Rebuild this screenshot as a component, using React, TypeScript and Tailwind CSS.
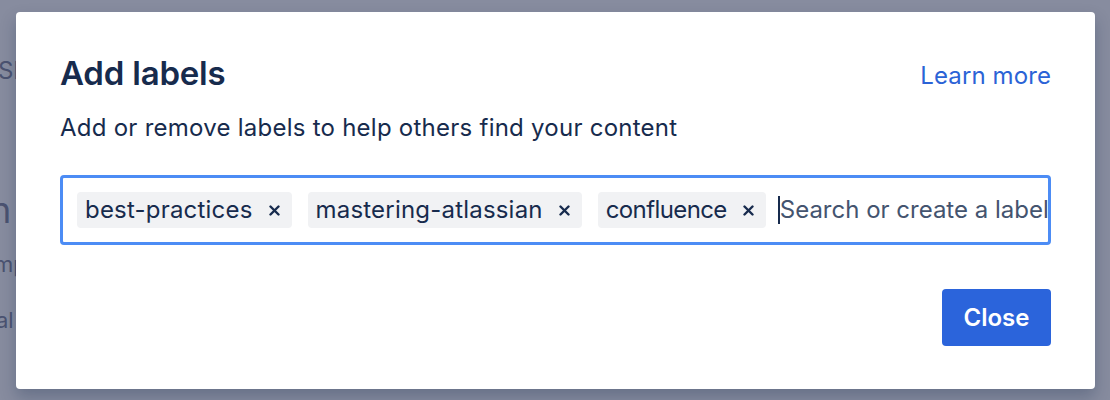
import React from "react";

const labels = [
  { text: "best-practices", tight: false },
  { text: "mastering-atlassian", tight: false },
  { text: "confluence", tight: true },
];

function Chip({ text, tight }: { text: string; tight: boolean }) {
  return (
    <div className="flex shrink-0 items-center h-[36px] rounded-[4px] bg-[#f1f2f4] pl-[8px] pr-[12px] gap-[16px] whitespace-nowrap">
      <span
        className={
          tight
            ? "text-[24px] leading-none tracking-[-0.6px] text-[#172b4d]"
            : "text-[24px] leading-none tracking-[0.2px] text-[#172b4d]"
        }
      >
        {text}
      </span>
      <svg width="11" height="11" viewBox="0 0 11 11" className="shrink-0">
        <path d="M1.5 1.5 L9.5 9.5 M9.5 1.5 L1.5 9.5" stroke="#172b4d" strokeWidth="2.4" strokeLinecap="round" />
      </svg>
    </div>
  );
}

export default function App() {
  return (
    <div
      className="relative w-[1110px] h-[400px] overflow-hidden bg-[#878c9f]"
      style={{ fontFamily: "Inter, 'Noto Sans', sans-serif" }}
    >
      {/* page behind the overlay */}
      <div className="absolute left-0 top-0 text-[#4b5371] leading-none whitespace-nowrap">
        <p className="absolute top-[59px] left-[-2px] text-[24px]">Sh</p>
        <p className="absolute top-[192px] left-[-10px] text-[36px]">n</p>
        <p className="absolute top-[253px] left-[-6px] text-[22px]">mp</p>
        <p className="absolute top-[309px] left-[-4px] text-[22px]">al</p>
      </div>

      {/* dialog */}
      <div className="absolute left-[16px] top-[12px] w-[1079px] h-[377px] rounded-[4px] bg-white shadow-[0_8px_16px_rgba(9,30,66,0.25)] px-[44px] pt-[41px]">
        <div className="flex items-start justify-between">
          <h1 className="text-[33px] font-semibold leading-[40px] text-[#172b4d] tracking-[-0.2px]">Add labels</h1>
          <a className="text-[24px] leading-[40px] text-[#2b63d6] mt-[3px] tracking-[0.1px]">Learn more</a>
        </div>
        <p className="mt-[18px] text-[24px] leading-[28px] tracking-[0.25px] text-[#172b4d]">
          Add or remove labels to help others find your content
        </p>
        <div className="mt-[33px] h-[70px] rounded-[4px] border-[3px] border-[#4c8cf5] flex items-center pl-[14px] gap-[16px] overflow-hidden">
          {labels.map((l) => (
            <Chip key={l.text} text={l.text} tight={l.tight} />
          ))}
          <div className="flex min-w-0 flex-1 items-center ml-[-4px] whitespace-nowrap overflow-hidden">
            <span className="w-[2px] h-[28px] shrink-0 bg-[#172b4d]" />
            <span className="text-[24px] leading-none text-[#44546f]">Search or create a label</span>
          </div>
        </div>
        <div className="flex justify-end mt-[44px]">
          <button className="w-[109px] h-[57px] rounded-[4px] bg-[#2b64db] text-white text-[24px] font-semibold">
            Close
          </button>
        </div>
      </div>
    </div>
  );
}
